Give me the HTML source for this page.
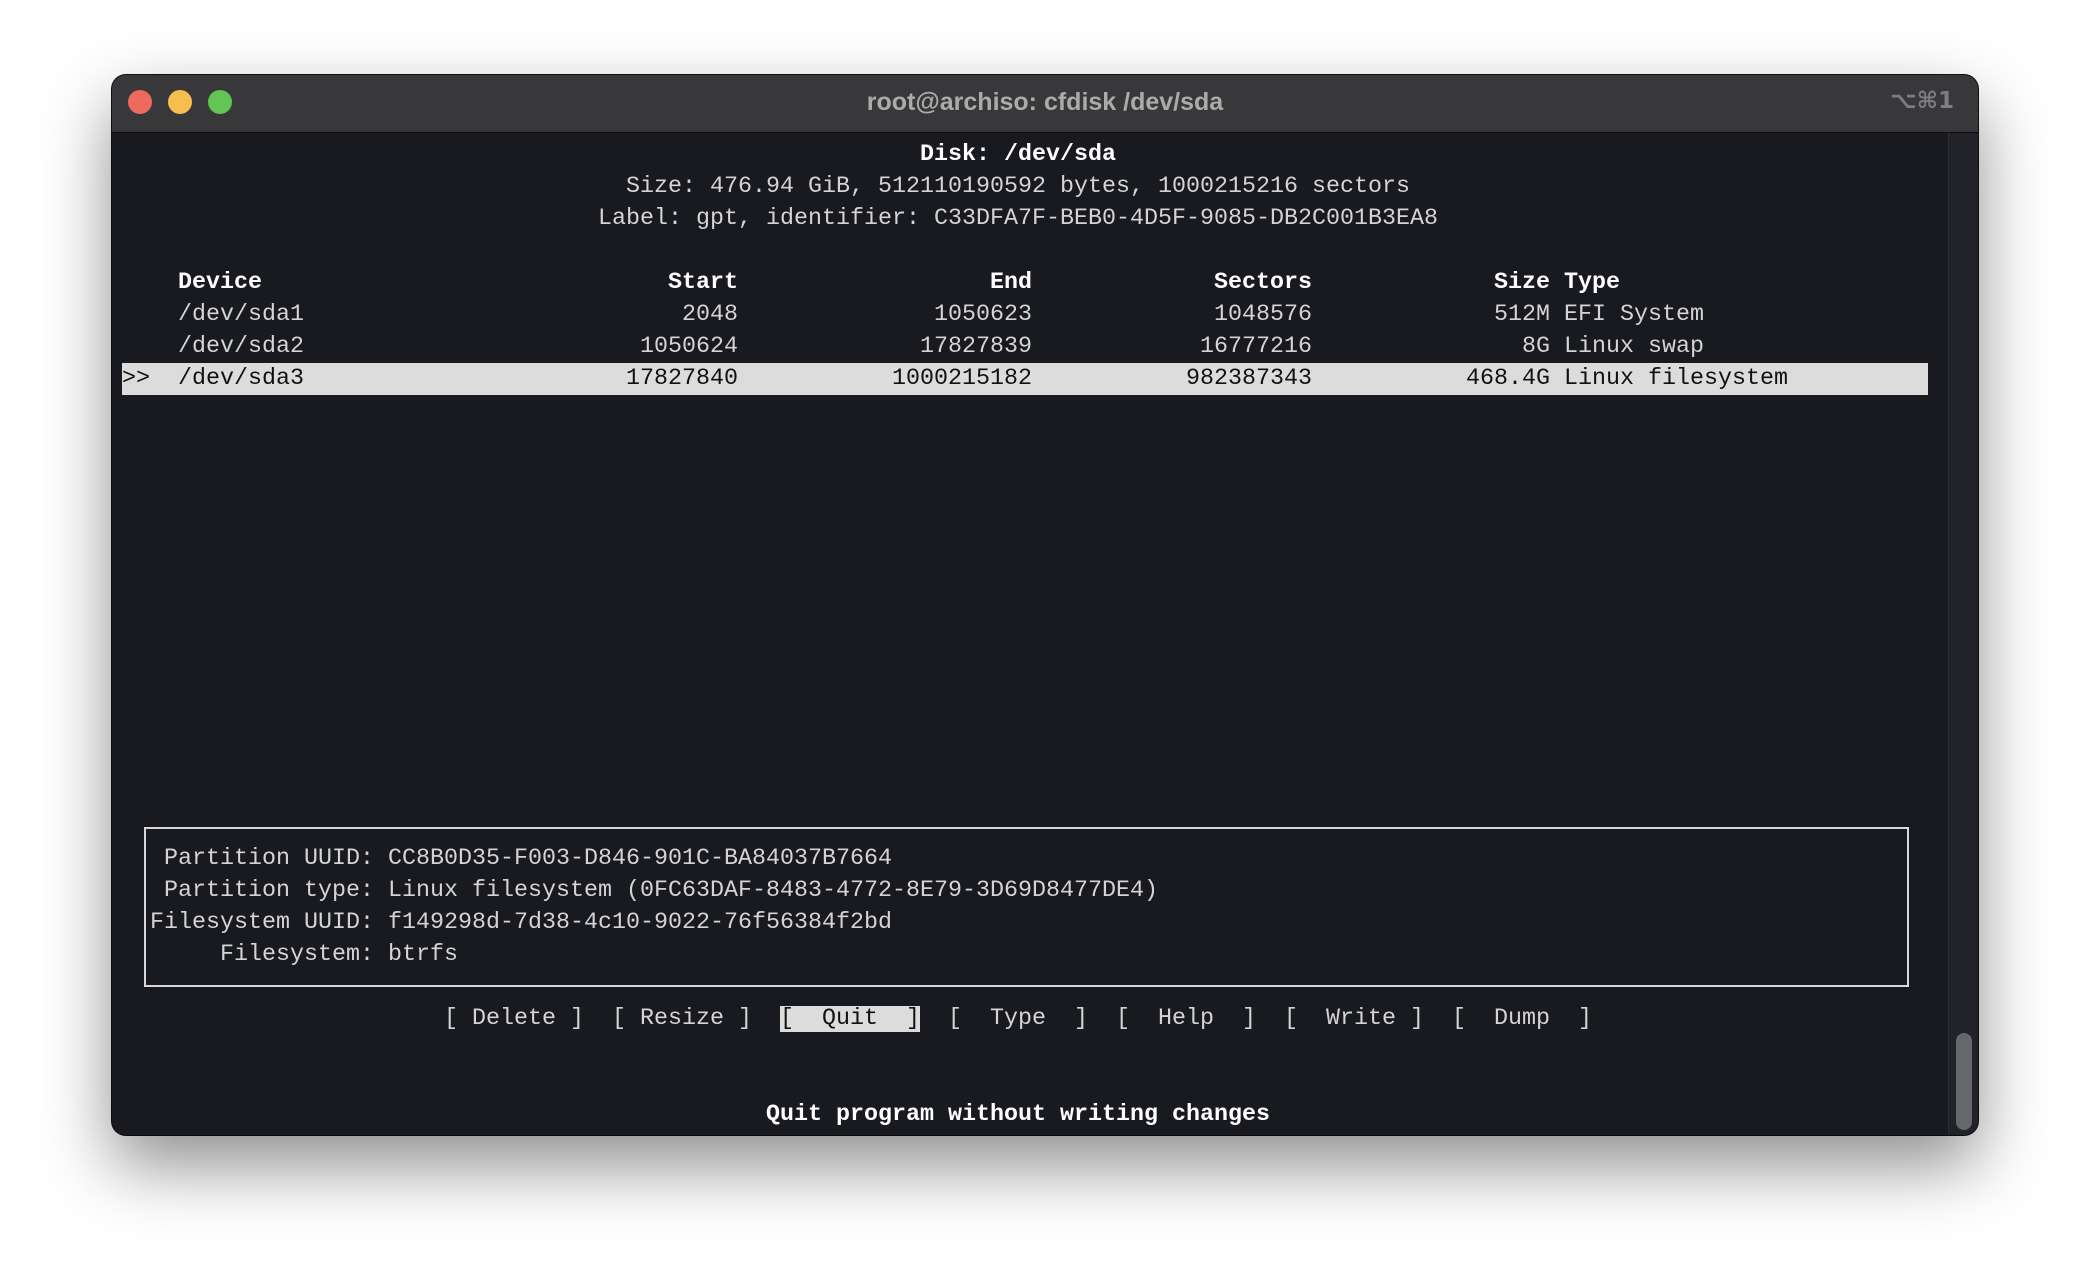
<!DOCTYPE html>
<html><head><meta charset="utf-8"><style>
body{margin:0;width:2090px;height:1284px;background:#fff;position:relative;overflow:hidden}
.win{position:absolute;left:112px;top:75px;width:1866px;height:1060px;border-radius:14px;background:#181a1f;box-shadow:0 30px 70px rgba(0,0,0,.45),0 0 0 1px #111;overflow:hidden}
.tb{position:absolute;left:0;top:0;width:100%;height:57px;background:#38383b;border-bottom:1px solid #0c0c0c}
.dot{position:absolute;top:15px;width:24px;height:24px;border-radius:50%}
.title{position:absolute;left:0;width:100%;top:13px;text-align:center;font:bold 25px "Liberation Sans",sans-serif;color:#ababab}
.kbd{position:absolute;right:24px;top:13px;font:bold 23px "DejaVu Sans",sans-serif;color:#7e7e80}
.track{position:absolute;left:1836px;top:58px;width:30px;height:1002px;background:#212328;border-left:1px solid #2b2d32}
.thumb{position:absolute;left:1844px;top:958px;width:16px;height:97px;border-radius:8px;background:#66676b}
.t{position:absolute;font:23.333px/32px "Liberation Mono",monospace;color:#d4d4d4;white-space:pre}
.b{font-weight:bold;color:#fff}
.hl{position:absolute;left:122px;top:363px;width:1806px;height:32px;background:#dcdcdc}
.box{position:absolute;left:144px;top:827px;width:1761px;height:156px;border:2px solid #d8d8d8}
</style></head><body>
<div class="win">
<div class="tb">
<div class="dot" style="left:16px;background:#ee6a5f"></div>
<div class="dot" style="left:56px;background:#f5be4f"></div>
<div class="dot" style="left:96px;background:#62c554"></div>
<div class="title">root@archiso: cfdisk /dev/sda</div>
<div class="kbd">⌥⌘1</div>
</div>
<div class="track"></div><div class="thumb"></div>
</div>
<div class="hl"></div>
<div class="box"></div>
<div class="t b" style="left:920px;top:139px">Disk: /dev/sda</div>
<div class="t" style="left:626px;top:171px">Size: 476.94 GiB, 512110190592 bytes, 1000215216 sectors</div>
<div class="t" style="left:598px;top:203px">Label: gpt, identifier: C33DFA7F-BEB0-4D5F-9085-DB2C001B3EA8</div>

<div class="t b" style="left:178px;top:267px">Device</div>
<div class="t b" style="right:1352px;top:267px">Start</div>
<div class="t b" style="right:1058px;top:267px">End</div>
<div class="t b" style="right:778px;top:267px">Sectors</div>
<div class="t b" style="right:540px;top:267px">Size</div>
<div class="t b" style="left:1564px;top:267px">Type</div>

<div class="t" style="left:178px;top:299px">/dev/sda1</div>
<div class="t" style="right:1352px;top:299px">2048</div>
<div class="t" style="right:1058px;top:299px">1050623</div>
<div class="t" style="right:778px;top:299px">1048576</div>
<div class="t" style="right:540px;top:299px">512M</div>
<div class="t" style="left:1564px;top:299px">EFI System</div>

<div class="t" style="left:178px;top:331px">/dev/sda2</div>
<div class="t" style="right:1352px;top:331px">1050624</div>
<div class="t" style="right:1058px;top:331px">17827839</div>
<div class="t" style="right:778px;top:331px">16777216</div>
<div class="t" style="right:540px;top:331px">8G</div>
<div class="t" style="left:1564px;top:331px">Linux swap</div>

<div class="t" style="left:122px;top:363px;color:#111">&gt;&gt;</div>
<div class="t" style="left:178px;top:363px;color:#111">/dev/sda3</div>
<div class="t" style="right:1352px;top:363px;color:#111">17827840</div>
<div class="t" style="right:1058px;top:363px;color:#111">1000215182</div>
<div class="t" style="right:778px;top:363px;color:#111">982387343</div>
<div class="t" style="right:540px;top:363px;color:#111">468.4G</div>
<div class="t" style="left:1564px;top:363px;color:#111">Linux filesystem</div>

<div class="t" style="left:164px;top:843px">Partition UUID: CC8B0D35-F003-D846-901C-BA84037B7664</div>
<div class="t" style="left:164px;top:875px">Partition type: Linux filesystem (0FC63DAF-8483-4772-8E79-3D69D8477DE4)</div>
<div class="t" style="left:150px;top:907px">Filesystem UUID: f149298d-7d38-4c10-9022-76f56384f2bd</div>
<div class="t" style="left:220px;top:939px">Filesystem: btrfs</div>

<div class="t" style="left:444px;top:1003px">[ Delete ]  [ Resize ]  <span style="background:#dcdcdc;color:#111">[  Quit  ]</span>  [  Type  ]  [  Help  ]  [  Write ]  [  Dump  ]</div>
<div class="t b" style="left:766px;top:1099px">Quit program without writing changes</div>
</body></html>
